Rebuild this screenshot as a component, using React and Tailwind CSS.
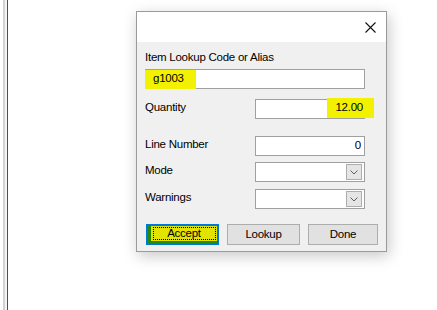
import React from "react";

function TextBox({ width, children, align = "left" }) {
  return (
    <div
      className={`h-[20px] ${width} bg-white border border-[#a0a0a0] flex items-center px-[3px] ${
        align === "right" ? "justify-end" : "justify-start"
      }`}
    >
      {children}
    </div>
  );
}

function ComboBox() {
  return (
    <div className="h-[20px] w-[110px] bg-white border border-[#a0a0a0] flex items-center justify-end pr-[2px]">
      <div className="w-[16px] h-[16px] bg-[#e5e5e5] border border-[#adadad] flex items-center justify-center">
        <svg width="8" height="5" viewBox="0 0 8 5">
          <path d="M0.5 0.5 L4 4 L7.5 0.5" fill="none" stroke="#606060" strokeWidth="1" />
        </svg>
      </div>
    </div>
  );
}

function Row({ label, children, className = "" }) {
  return (
    <div className={`flex items-center justify-between w-[220px] h-[20px] ${className}`}>
      <span className="-mt-[2px]">{label}</span>
      {children}
    </div>
  );
}

export default function App() {
  return (
    <div
      className="w-[437px] h-[310px] bg-white flex overflow-hidden text-[11.5px] tracking-[-0.25px] text-black"
      style={{ fontFamily: '"Liberation Sans", Arial, sans-serif' }}
    >
      {/* left window edge */}
      <div className="flex h-full">
        <div className="w-[3px]" />
        <div className="w-[2px] bg-[#d2d2d2]" />
        <div className="w-[2px] bg-[#f4f4f4]" />
        <div className="w-[1px] bg-[#505050]" />
      </div>

      {/* dialog */}
      <div className="ml-[128px] mt-[11px] w-[251px] h-[241px] border border-[#9a9a9a] bg-[#f0f0f0] shadow-[2px_4px_14px_rgba(0,0,0,0.22)] flex flex-col">
        <div className="h-[30px] bg-white flex items-center justify-end pr-[10px]">
          <svg width="11" height="11" viewBox="0 0 11 11">
            <path d="M0.5 0.5 L10.5 10.5 M10.5 0.5 L0.5 10.5" stroke="#111" strokeWidth="1.1" />
          </svg>
        </div>

        <div className="pl-[8px] flex flex-col">
          <div className="mt-[7px] h-[16px] leading-[16px]">Item Lookup Code or Alias</div>
          <div className="mt-[4px]">
            <TextBox width="w-[220px]">
              <span className="bg-[#f2f200] -ml-[4px] pl-[8px] pr-[12px] h-[19px] flex items-center">g1003</span>
            </TextBox>
          </div>

          <Row label="Quantity" className="mt-[10px]">
            <div className="relative">
              <TextBox width="w-[110px]" align="right" />
              <div className="absolute top-[-1px] right-[-9px] w-[47px] h-[20px] bg-[#f2f200] flex items-center justify-end pr-[11px]">
                <span>12.00</span>
              </div>
            </div>
          </Row>

          <Row label="Line Number" className="mt-[17px]">
            <TextBox width="w-[110px]" align="right">
              <span>0</span>
            </TextBox>
          </Row>
          <Row label="Mode" className="mt-[6px]">
            <ComboBox />
          </Row>
          <Row label="Warnings" className="mt-[7px]">
            <ComboBox />
          </Row>

          <div className="mt-[15px] flex gap-[8px] ml-[1px]">
            <button className="w-[73px] h-[21px] border-2 border-[#0078d7] bg-[#e1e1e1] p-0">
              <div className="w-full h-full bg-[#e3e300] border-l-[3px] border-b-[2px] border-[#2a8a00] flex items-center justify-center">
                <div className="w-[63px] h-[13px] border border-dotted border-black flex items-center justify-center leading-none">
                  Accept
                </div>
              </div>
            </button>
            <button className="w-[73px] h-[21px] border border-[#adadad] bg-[#e1e1e1] flex items-center justify-center">
              Lookup
            </button>
            <button className="w-[70px] h-[21px] border border-[#adadad] bg-[#e1e1e1] flex items-center justify-center">
              Done
            </button>
          </div>
        </div>
      </div>
    </div>
  );
}
